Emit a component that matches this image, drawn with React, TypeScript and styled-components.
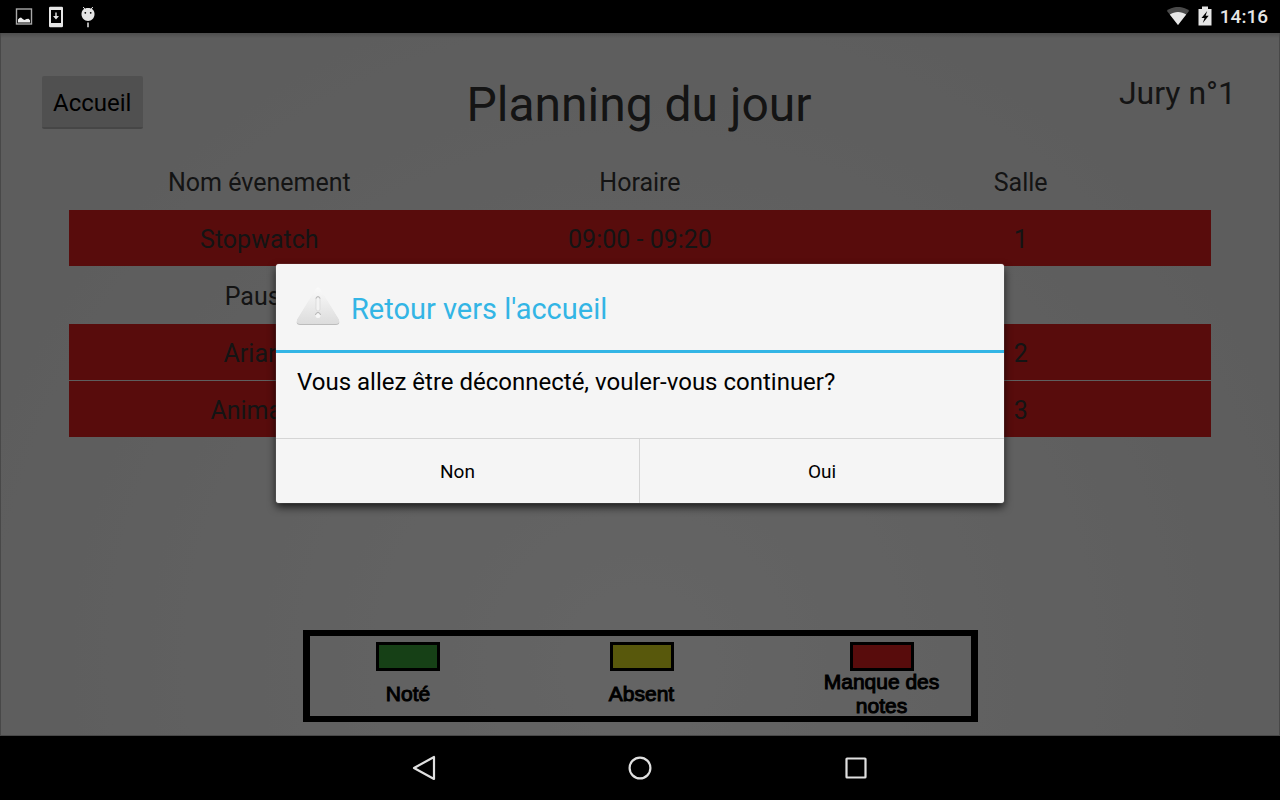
import React from "react";
import styled, { createGlobalStyle } from "styled-components";

const GlobalStyle = createGlobalStyle`
  *, *::before, *::after { box-sizing: border-box; }
  body { margin: 0; background: #000; font-family: Roboto, "Noto Sans", sans-serif; }
  button { font-family: inherit; }
`;

const Device = styled.div`
  display: flex;
  flex-direction: column;
  min-height: 100vh;
`;

const StatusBar = styled.div`
  display: flex;
  align-items: center;
  justify-content: space-between;
  height: 33px;
  padding: 0 12px 0 14px;
  background: #000;
  color: #e6e6e6;
`;

const StatusGroup = styled.div<{ $gap: number }>`
  display: flex;
  align-items: center;
  gap: ${(p) => p.$gap}px;

  svg { display: block; }
`;

const Clock = styled.time`
  font-size: 19px;
  line-height: 24px;
  font-weight: 500;
`;

const Screen = styled.div`
  position: relative;
  flex: 1;
  display: flex;
  flex-direction: column;
  border: solid #b4b4b4;
  border-width: 0 1px 1px;
  background:
    linear-gradient(rgba(0, 0, 0, 0.16), rgba(0, 0, 0, 0) 5px),
    radial-gradient(circle 720px at 50% 90%, #fbfbfb, #e8e8e8);
`;

const Header = styled.header`
  display: grid;
  grid-template-columns: 1fr auto 1fr;
  align-items: start;
  padding: 43px 43px 19px 41px;
`;

const HomeButton = styled.button`
  justify-self: start;
  height: 53px;
  padding: 2px 12px 0 11px;
  border: 0;
  border-bottom: 2px solid #b0b0b0;
  border-radius: 2px;
  background: #c8c8c8;
  color: #000;
  font-size: 24px;
`;

const Title = styled.h1`
  margin: 0;
  color: #333;
  font-size: 48px;
  line-height: 58px;
  font-weight: 400;
`;

const Jury = styled.div`
  justify-self: end;
  color: #333;
  font-size: 32px;
  line-height: 34px;
`;

const ScheduleWrap = styled.div`
  padding: 0 68px;
`;

const Schedule = styled.table`
  width: 100%;
  table-layout: fixed;
  border-spacing: 0;
  color: #333;
  font-size: 25px;
`;

const HeadCell = styled.th`
  height: 57px;
  padding: 2px 0 0;
  font-weight: 400;
  text-align: center;
`;

const Cell = styled.td<{ $missing: boolean }>`
  height: 57px;
  padding: 3px 0 0;
  border-bottom: 1px solid transparent;
  background: ${(p) => (p.$missing ? "#dc1e1e" : "transparent")};
  background-clip: padding-box;
  text-align: center;
`;

const Legend = styled.div`
  display: grid;
  grid-template-columns: 165fr 302fr 178fr;
  align-self: center;
  width: 675px;
  max-width: 100%;
  height: 92px;
  margin: auto 0 13px;
  padding: 6px 0 0 16px;
  border: solid #000;
  border-width: 6px 7px;
  color: #000;
`;

const LegendItem = styled.div`
  display: flex;
  flex-direction: column;
  align-items: center;
`;

const Swatch = styled.span<{ $color: string }>`
  width: 64px;
  height: 29px;
  border: 3px solid #000;
  background: ${(p) => p.$color};
`;

const LegendLabel = styled.span`
  display: flex;
  align-items: center;
  justify-content: center;
  width: 120px;
  height: 46px;
  font: 21px/24px "Liberation Sans", Arial, sans-serif;
  text-align: center;
  -webkit-text-stroke: 1px #000;
`;

const Backdrop = styled.div`
  position: absolute;
  inset: 0 -1px -1px;
  display: flex;
  align-items: center;
  justify-content: center;
  padding-bottom: 2px;
  background: rgba(0, 0, 0, 0.6);
`;

const Dialog = styled.div`
  width: 728px;
  max-width: 100%;
  border-radius: 3px;
  background: #f5f5f5;
  box-shadow: 0 0 1px rgba(255, 255, 255, 0.7), 0 4px 8px rgba(0, 0, 0, 0.75);
  color: #000;
`;

const DialogHead = styled.div`
  display: flex;
  align-items: center;
  gap: 11px;
  height: 89px;
  padding: 0 20px;
  border-bottom: 3px solid #33b5e5;
`;

const DialogTitle = styled.h2`
  margin: 0;
  padding-top: 4px;
  color: #33b5e5;
  font-size: 29px;
  line-height: 36px;
  font-weight: 400;
`;

const Message = styled.p`
  margin: 0;
  min-height: 85px;
  padding: 15px 21px;
  font-size: 24px;
  line-height: 28px;
`;

const Actions = styled.div`
  display: grid;
  grid-template-columns: 1fr 1fr;
  border-top: 1px solid #d5d5d5;
`;

const ActionButton = styled.button`
  height: 64px;
  padding: 0;
  border: 0;
  background: transparent;
  color: #000;
  font-size: 19px;

  &:first-child { border-right: 1px solid #d5d5d5; }
`;

const NavBar = styled.nav`
  display: flex;
  align-items: center;
  justify-content: center;
  gap: 152px;
  height: 64px;
  background: #000;
`;

const NavButton = styled.button`
  width: 64px;
  height: 64px;
  padding: 0;
  border: 0;
  background: transparent;

  svg { display: block; margin: auto; }
`;

const PictureIcon = () => (
  <svg width="20" height="20" viewBox="0 0 20 20" aria-hidden="true">
    <rect x="2.5" y="2" width="15" height="15" fill="none" stroke="#a8a8a8" strokeWidth="1.4" />
    <path d="M4 15.5v-3l1.500-1.600 1.500-.4 2 1.800 1.500.8 2-1.200 2-.2 1.500 1.600v2.200z" fill="#eee" />
  </svg>
);

const DownloadIcon = () => (
  <svg width="16" height="22" viewBox="0 0 16 22" aria-hidden="true">
    <path
      fillRule="evenodd"
      fill="#e6e6e6"
      d="M2.2.8h11.6q1.2 0 1.2 1.2v18q0 1.2-1.2 1.2H2.2Q1 21.200 1 20V2Q1 .8 2.200.8zM3 4v13h10V4z"
    />
    <path d="M7.300 6.500h1.400v3.500H11L8 13.500 5 10h2.300z" fill="#e6e6e6" />
  </svg>
);

const DroidIcon = () => (
  <svg width="20" height="22" viewBox="-2 0 20 22" aria-hidden="true">
    <path d="M3.200 1l2 2.500M12.800 1l-2 2.500" stroke="#e6e6e6" strokeWidth="1" />
    <path d="M8 2c4 0 6.500 2.300 6.500 6 0 4-2.800 7-6.500 7s-6.500-3-6.500-7c0-3.700 2.500-6 6.500-6z" fill="#e6e6e6" />
    <circle cx="5.300" cy="6.800" r="0.900" fill="#000" />
    <circle cx="10.700" cy="6.800" r="0.900" fill="#000" />
    <path d="M8 16.500v4.700" stroke="#e6e6e6" strokeWidth="1.500" />
  </svg>
);

const WifiIcon = () => (
  <svg width="24" height="20" viewBox="0 0 24 20" aria-hidden="true">
    <path d="M12 18L.800 3.800C4 1.200 8 -.100 12 -.100s8 1.300 11.200 3.900z" fill="#4a4a4a" />
    <path d="M12 18L3.800 7.600C6.200 5.800 9 4.900 12 4.900s5.800.900 8.200 2.700z" fill="#e6e6e6" />
  </svg>
);

const BatteryIcon = () => (
  <svg width="14" height="22" viewBox="0 0 14 22" aria-hidden="true">
    <path d="M4 .5h6V3h3.500v16.500H.5V3H4z" fill="#e6e6e6" />
    <path d="M9.200 5L3.500 12h3l-1.700 5 5.900-7.200H7.600L9.200 5z" fill="#000" />
  </svg>
);

const WarningIcon = () => (
  <svg width="44" height="42" viewBox="0 0 44 42" aria-hidden="true">
    <defs>
      <linearGradient id="warn" x1="0" y1="0" x2="0" y2="1">
        <stop offset="0" stopColor="#fafafa" />
        <stop offset="1" stopColor="#dcdcdc" />
      </linearGradient>
    </defs>
    <path d="M19.500 5q2.500-4 5 0L42.600 34q2 5-2.600 5H4q-4.600 0-2.600-5z" fill="#bcbcbc" />
    <path d="M19.500 3.500q2.500-4 5 0L42.600 33q2 5-2.600 5H4q-4.600 0-2.600-5z" fill="url(#warn)" />
    <rect x="20" y="11" width="4" height="14" rx="2" fill="#f3f3f3" stroke="#d6d6d6" strokeWidth="0.700" />
    <path d="M20 12.600q0-2 2-2t2 2" fill="none" stroke="#b8b8b8" />
    <circle cx="22" cy="29.500" r="2.500" fill="#f6f6f6" />
    <path d="M19.500 29q.4-2.500 2.500-2.500t2.500 2.500" fill="none" stroke="#b0b0b0" />
  </svg>
);

interface EventRow {
  name: string;
  time: string;
  room: string;
  missing: boolean;
}

const events: EventRow[] = [
  { name: "Stopwatch", time: "09:00 - 09:20", room: "1", missing: true },
  { name: "Pause", time: "", room: "", missing: false },
  { name: "Ariane", time: "", room: "2", missing: true },
  { name: "Animaux", time: "", room: "3", missing: true },
];

const legend = [
  { label: "Noté", color: "#37a037" },
  { label: "Absent", color: "#dcdc1e" },
  { label: "Manque des notes", color: "#dc1e1e" },
];

export default function App() {
  return (
    <>
      <GlobalStyle />
      <Device>
        <StatusBar>
          <StatusGroup $gap={14}>
            <PictureIcon />
            <DownloadIcon />
            <DroidIcon />
          </StatusGroup>
          <StatusGroup $gap={8}>
            <WifiIcon />
            <BatteryIcon />
            <Clock>14:16</Clock>
          </StatusGroup>
        </StatusBar>

        <Screen>
          <Header>
            <HomeButton type="button">Accueil</HomeButton>
            <Title>Planning du jour</Title>
            <Jury>Jury n°1</Jury>
          </Header>

          <ScheduleWrap>
            <Schedule>
              <thead>
                <tr>
                  <HeadCell scope="col">Nom évenement</HeadCell>
                  <HeadCell scope="col">Horaire</HeadCell>
                  <HeadCell scope="col">Salle</HeadCell>
                </tr>
              </thead>
              <tbody>
                {events.map((e) => (
                  <tr key={e.name}>
                    <Cell $missing={e.missing}>{e.name}</Cell>
                    <Cell $missing={e.missing}>{e.time}</Cell>
                    <Cell $missing={e.missing}>{e.room}</Cell>
                  </tr>
                ))}
              </tbody>
            </Schedule>
          </ScheduleWrap>

          <Legend>
            {legend.map((l) => (
              <LegendItem key={l.label}>
                <Swatch $color={l.color} />
                <LegendLabel>{l.label}</LegendLabel>
              </LegendItem>
            ))}
          </Legend>

          <Backdrop>
            <Dialog role="alertdialog" aria-labelledby="dialog-title" aria-describedby="dialog-message">
              <DialogHead>
                <WarningIcon />
                <DialogTitle id="dialog-title">Retour vers l'accueil</DialogTitle>
              </DialogHead>
              <Message id="dialog-message">Vous allez être déconnecté, vouler-vous continuer?</Message>
              <Actions>
                <ActionButton type="button">Non</ActionButton>
                <ActionButton type="button">Oui</ActionButton>
              </Actions>
            </Dialog>
          </Backdrop>
        </Screen>

        <NavBar>
          <NavButton type="button" aria-label="Retour">
            <svg width="26" height="26" viewBox="0 0 26 26">
              <path d="M23 2v22L3 13z" fill="none" stroke="#e0e0e0" strokeWidth="2.200" strokeLinejoin="round" />
            </svg>
          </NavButton>
          <NavButton type="button" aria-label="Accueil">
            <svg width="26" height="26" viewBox="0 0 26 26">
              <circle cx="13" cy="13" r="10.400" fill="none" stroke="#e0e0e0" strokeWidth="2.200" />
            </svg>
          </NavButton>
          <NavButton type="button" aria-label="Applications récentes">
            <svg width="26" height="26" viewBox="0 0 26 26">
              <rect x="3.500" y="3.500" width="19" height="19" rx="0.500" fill="none" stroke="#e0e0e0" strokeWidth="2.200" />
            </svg>
          </NavButton>
        </NavBar>
      </Device>
    </>
  );
}
